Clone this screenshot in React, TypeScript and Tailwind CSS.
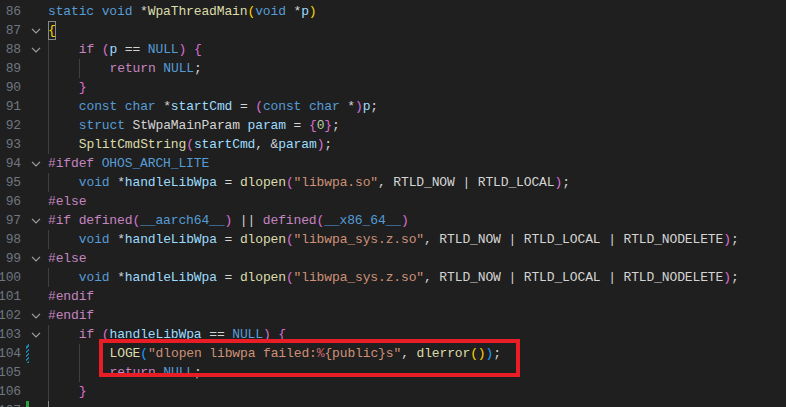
import React from "react";

type Tok = [string, string];

const D = "text-[#d4d4d4]";
const KW = "text-[#569cd6]";
const CT = "text-[#c586c0]";
const FN = "text-[#dcdcaa]";
const VR = "text-[#9cdcfe]";
const TY = "text-[#d4d4d4]";
const ST = "text-[#ce9178]";
const NU = "text-[#b5cea8]";
const B1 = "text-[#ffd700]";
const B2 = "text-[#da70d6]";
const B3 = "text-[#179fff]";
const PC = "text-[#d16969]";

type Line = {
  n: number;
  indent: number;
  toks: Tok[];
  fold?: boolean;
  marker?: "mod" | "add";
  box?: boolean;
  activeGuide?: boolean;
};

const dlopenSys: Tok[] = [
  ["void", KW], [" *", D], ["handleLibWpa", VR], [" = ", D], ["dlopen", FN], ["(", B2],
  ["\"libwpa_sys.z.so\"", ST], [", RTLD_NOW | RTLD_LOCAL | RTLD_NODELETE", D], [")", B2], [";", D],
];

const lines: Line[] = [
  { n: 86, indent: 0, toks: [["static", KW], [" ", D], ["void", KW], [" *", D], ["WpaThreadMain", FN], ["(", B1], ["void", KW], [" *", D], ["p", VR], [")", B1]] },
  { n: 87, indent: 0, fold: true, box: true, toks: [] },
  { n: 88, indent: 1, fold: true, toks: [["if", CT], [" ", D], ["(", B2], ["p", VR], [" == ", D], ["NULL", KW], [")", B2], [" ", D], ["{", B2]] },
  { n: 89, indent: 2, toks: [["return", CT], [" ", D], ["NULL", KW], [";", D]] },
  { n: 90, indent: 1, toks: [["}", B2]] },
  { n: 91, indent: 1, toks: [["const", KW], [" ", D], ["char", KW], [" *", D], ["startCmd", VR], [" = ", D], ["(", B2], ["const", KW], [" ", D], ["char", KW], [" *", D], [")", B2], ["p", VR], [";", D]] },
  { n: 92, indent: 1, toks: [["struct", KW], [" ", D], ["StWpaMainParam", TY], [" ", D], ["param", VR], [" = ", D], ["{", B2], ["0", NU], ["}", B2], [";", D]] },
  { n: 93, indent: 1, toks: [["SplitCmdString", FN], ["(", B2], ["startCmd", VR], [", &", D], ["param", VR], [")", B2], [";", D]] },
  { n: 94, indent: 0, fold: true, toks: [["#ifdef", CT], [" ", D], ["OHOS_ARCH_LITE", KW]] },
  { n: 95, indent: 1, toks: [["void", KW], [" *", D], ["handleLibWpa", VR], [" = ", D], ["dlopen", FN], ["(", B2], ["\"libwpa.so\"", ST], [", RTLD_NOW | RTLD_LOCAL", D], [")", B2], [";", D]] },
  { n: 96, indent: 0, toks: [["#else", CT]] },
  { n: 97, indent: 0, fold: true, toks: [["#if", CT], [" ", D], ["defined", CT], ["(", B2], ["__aarch64__", KW], [")", B2], [" || ", D], ["defined", CT], ["(", B2], ["__x86_64__", KW], [")", B2]] },
  { n: 98, indent: 1, toks: dlopenSys },
  { n: 99, indent: 0, fold: true, toks: [["#else", CT]] },
  { n: 100, indent: 1, toks: dlopenSys },
  { n: 101, indent: 0, toks: [["#endif", CT]] },
  { n: 102, indent: 0, fold: true, toks: [["#endif", CT]] },
  { n: 103, indent: 1, fold: true, toks: [["if", CT], [" ", D], ["(", B2], ["handleLibWpa", VR], [" == ", D], ["NULL", KW], [")", B2], [" ", D], ["{", B2]] },
  { n: 104, indent: 2, marker: "mod", toks: [["LOGE", FN], ["(", B3], ["\"dlopen libwpa failed:", ST], ["%", PC], ["{public}s\"", ST], [", ", D], ["dlerror", FN], ["()", B1], [")", B3], [";", D]] },
  { n: 105, indent: 2, toks: [["return", CT], [" ", D], ["NULL", KW], [";", D]] },
  { n: 106, indent: 1, toks: [["}", B2]] },
  { n: 107, indent: 1, marker: "add", activeGuide: true, toks: [] },
];

function Chevron() {
  return (
    <svg width="10" height="6" viewBox="0 0 10 6" className="block">
      <path d="M1 0.8 L5 4.8 L9 0.8" fill="none" stroke="#a0a0a0" strokeWidth="1.2" />
    </svg>
  );
}

export default function App() {
  return (
    <div
      className="relative w-[786px] h-[407px] overflow-hidden bg-[#1f1f1f] pt-[2px]"
      style={{ fontFamily: '"Liberation Mono", "DejaVu Sans Mono", monospace' }}
    >
      <div className="flex flex-col">
        {lines.map((l) => (
          <div key={l.n} className="flex h-[19px] leading-[19px] text-[13px] tracking-[-0.13px] whitespace-pre">
            <div className="w-[21px] shrink-0 flex justify-end text-[#6e7681]">{l.n}</div>
            <div className="w-[5px] shrink-0" />
            <div className="w-[3px] shrink-0 h-[19px]">
              {l.marker === "mod" && (
                <div className="h-full w-full bg-[repeating-linear-gradient(-45deg,#1b81a8_0px,#1b81a8_1.5px,transparent_1.5px,transparent_3px)]" />
              )}
              {l.marker === "add" && <div className="h-full w-full bg-[#2ea043]" />}
            </div>
            <div className="w-[2px] shrink-0" />
            <div className="w-[10px] shrink-0 flex items-center justify-center">{l.fold && <Chevron />}</div>
            <div className="w-[7px] shrink-0" />
            <div className="flex items-start">
              {Array.from({ length: l.indent }).map((_, i) => (
                <span
                  key={i}
                  className={
                    l.activeGuide
                      ? "inline-block w-[30.8px] h-[19px] shrink-0 shadow-[inset_1px_0_0_#8b8b8b]"
                      : "inline-block w-[30.8px] h-[19px] shrink-0 shadow-[inset_1px_0_0_#404040]"
                  }
                />
              ))}
              {l.box && (
                <span className="inline-block w-[7.7px] h-[19px] shadow-[inset_0_0_0_1px_#888888] text-[#ffd700]">{"{"}</span>
              )}
              <span>
                {l.toks.map(([t, c], i) => (
                  <span key={i} className={c}>
                    {t}
                  </span>
                ))}
              </span>
            </div>
          </div>
        ))}
      </div>
      <div className="absolute left-[99px] top-[339px] w-[421px] h-[38px] border-[4px] border-[#e81d25]" />
    </div>
  );
}
